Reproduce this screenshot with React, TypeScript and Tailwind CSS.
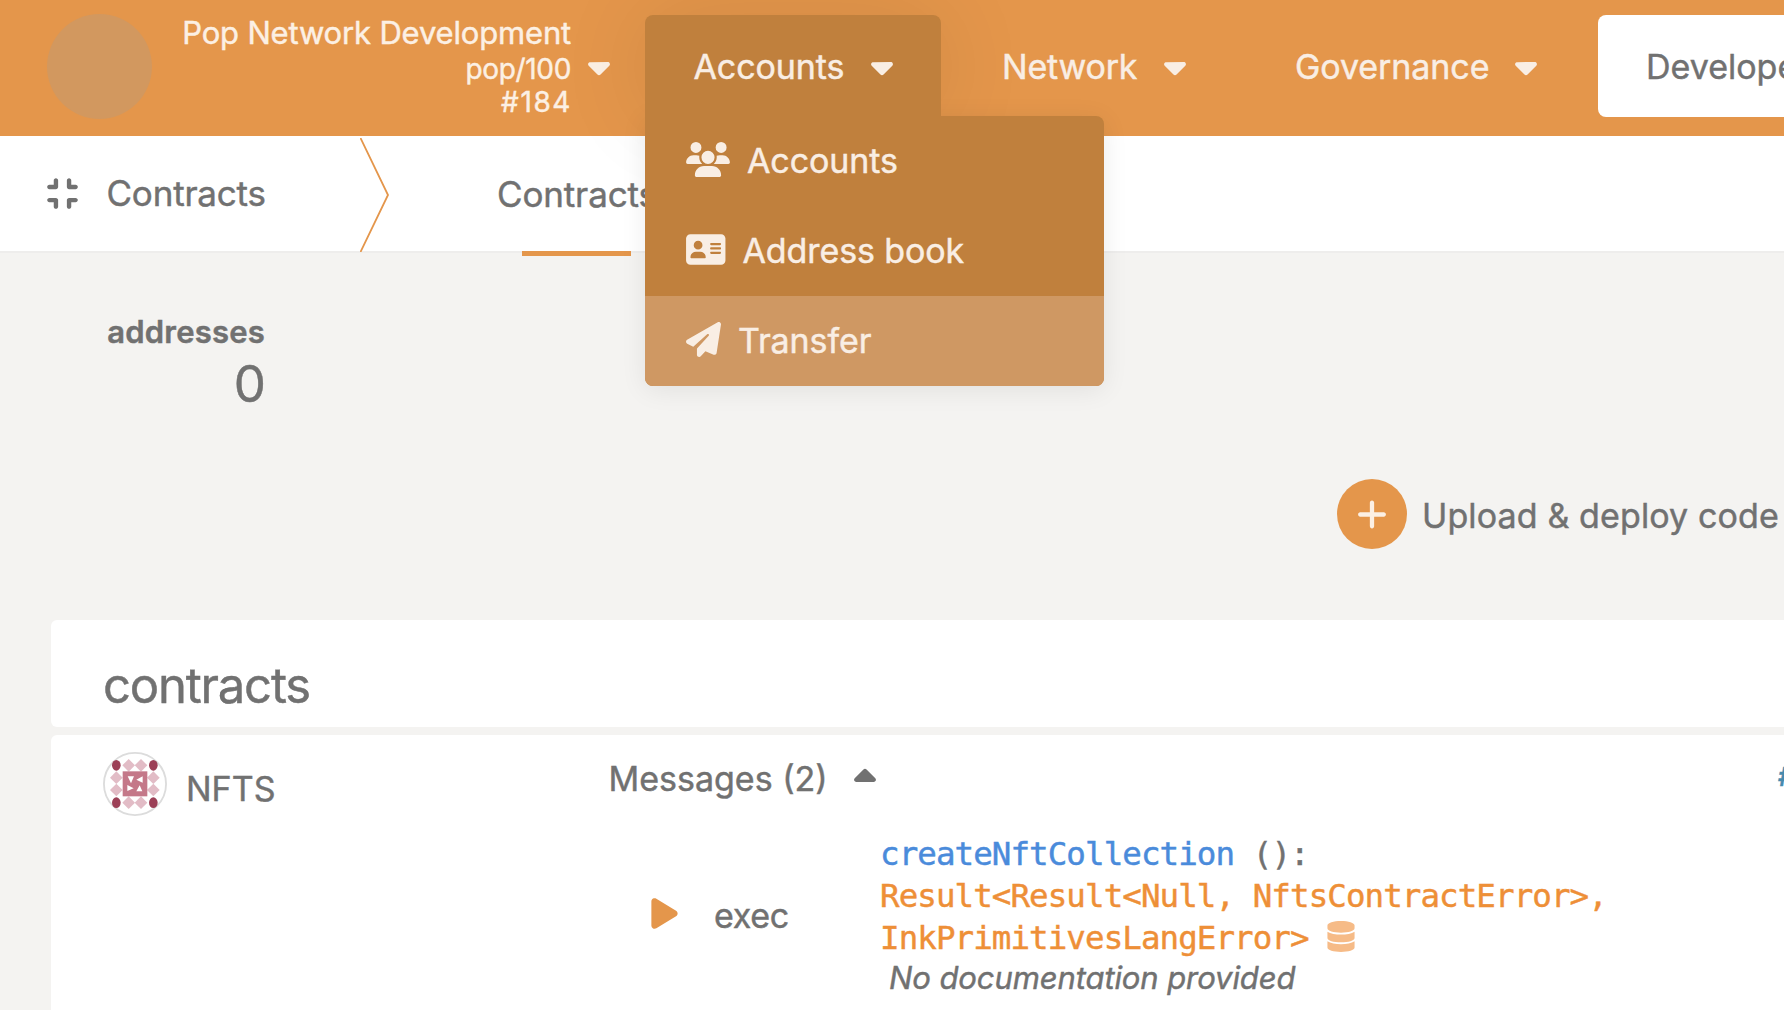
import type { ReactNode } from 'react';
import { FaDatabase } from 'react-icons/fa';
import {
  FaAddressCard,
  FaCaretDown,
  FaCaretUp,
  FaCompress,
  FaPaperPlane,
  FaPlay,
  FaPlus,
  FaUsers,
} from 'react-icons/fa6';

function ChainInfo() {
  return (
    <div className="flex w-[645px] shrink-0 text-[#fcf0e4]">
      <div className="mt-[14px] ml-[47px] size-[105px] shrink-0 rounded-full bg-[#d2985f]" />
      <div className="mt-[14px] flex w-[419px] flex-col items-end">
        <div className="h-[38px] text-[31px] leading-[38px] tracking-[-0.17px]">Pop Network Development</div>
        <div className="h-[33px] text-[28px] leading-[35px] tracking-[-0.34px]">pop/100</div>
        <div className="-mr-[1px] h-[34px] text-[28px] leading-[35px] tracking-[1.6px]">#184</div>
      </div>
      <FaCaretDown className="mt-[49px] ml-[17px] h-[35px] w-[22px]" />
    </div>
  );
}

function MenuItem({ icon, label, active }: { icon: ReactNode; label: string; active?: boolean }) {
  return (
    <div className={`flex h-[90px] items-center gap-[17px] pl-[41px] ${active ? 'bg-[#cf9863]' : ''}`}>
      <span className="pb-[3px]">{icon}</span>
      <span className="leading-[40px] tracking-[-0.1px]">{label}</span>
    </div>
  );
}

function AccountsTab() {
  return (
    <div className="relative mt-[15px] h-[102px] w-[296px] shrink-0 rounded-t-lg shadow-[0_0_95px_rgba(0,0,0,0.09)]">
      <div className="absolute top-[101px] left-0 z-10 w-[459px] overflow-hidden rounded-tr-lg rounded-b-lg bg-[#c0803d] shadow-[0_4px_26px_rgba(0,0,0,0.08)]">
        <MenuItem icon={<FaUsers className="h-[35px] w-[44px]" />} label="Accounts" />
        <MenuItem icon={<FaAddressCard className="h-[35px] w-[39.5px]" />} label="Address book" />
        <MenuItem icon={<FaPaperPlane className="size-[35px]" />} label="Transfer" active />
      </div>
      <div className="relative z-20 flex h-full items-center rounded-t-lg bg-[#c0803d] pl-[48.5px]">
        <span className="w-[152.5px] tracking-[-0.1px]">Accounts</span>
        <FaCaretDown className="ml-[25px] h-[35px] w-[22px]" />
      </div>
    </div>
  );
}

function Header() {
  return (
    <header className="flex h-[136px] bg-[#e4964b] text-[34px] text-[#f9eee4]">
      <ChainInfo />
      <AccountsTab />
      <div className="mt-[15px] flex h-[102px] w-[293px] shrink-0 items-center pl-[61px]">
        <span className="w-[137px] tracking-[-0.2px]">Network</span>
        <FaCaretDown className="ml-[25px] h-[35px] w-[22px]" />
      </div>
      <div className="mt-[15px] flex h-[102px] w-[364px] shrink-0 items-center pl-[61px]">
        <span className="w-[195px] tracking-[-0.08px]">Governance</span>
        <FaCaretDown className="ml-[25px] h-[35px] w-[22px]" />
      </div>
      <div className="mt-[15px] flex h-[102px] w-[300px] shrink-0 items-center rounded-lg bg-white pl-[48px] text-[#717171]">
        Developer
      </div>
    </header>
  );
}

function SubTabs() {
  return (
    <nav className="flex h-[115px] bg-white text-[35px]">
      <div className="flex w-[360px] items-center pl-[47px]">
        <FaCompress className="h-[35px] w-[31px]" />
        <span className="ml-[28.5px] tracking-[-0.2px]">Contracts</span>
      </div>
      <svg className="mt-[2px] h-[114px] w-[30px] shrink-0" viewBox="0 0 30 114" fill="none">
        <path d="M0.5 0L28 57L0.5 114" stroke="#e4964b" strokeWidth="1.8" />
      </svg>
      <div className="relative flex items-center pl-[107px]">
        <span className="pt-[1px] tracking-[-0.14px]">Contracts</span>
        <div className="absolute top-[115px] left-[132px] h-[5px] w-[109px] bg-[#e4964b]" />
      </div>
    </nav>
  );
}

function Identicon() {
  const lights = [
    [116, 76], [153, 76], [116, 188], [153, 188],
    [79, 113], [79, 150], [190, 113], [190, 150],
  ];
  const darks = [[79, 76], [190, 76], [79, 188], [190, 188]];
  return (
    <svg className="size-[64px] shrink-0" viewBox="39 36 192 192">
      <circle cx="135" cy="132" r="93.2" fill="#fff" stroke="#dcdcdc" strokeWidth="5.5" />
      {lights.map(([x, y]) => (
        <path key={`${x}-${y}`} d={`M${x} ${y - 19}l19 19l-19 19l-19 -19z`} fill="#e2bcc6" />
      ))}
      {darks.map(([x, y]) => (
        <ellipse key={`${x}-${y}`} cx={x} cy={y} rx="13" ry="16" fill="#9c4057" />
      ))}
      <rect x="98" y="94" width="74" height="75" fill="#c47889" />
      <path d="M113 109H132L123 130ZM139 119L158 109V128ZM112 135L131 145L112 153ZM149 136L157 154H139Z" fill="#fff" />
    </svg>
  );
}

function ContractRow() {
  return (
    <section className="flex h-[275px] overflow-hidden rounded-tl-[6px] bg-white pl-[52px]">
      <div className="flex w-[507px] shrink-0 pt-[17px]">
        <Identicon />
        <span className="mt-[17px] ml-[19px] h-[40px] text-[34px] leading-[40px]">NFTS</span>
      </div>
      <div className="w-[1166px] shrink-0">
        <div className="flex h-[84px] pt-[23px] leading-[42px]">
          <span className="-ml-[1.5px] w-[217.5px] whitespace-nowrap">Messages (2)</span>
          <FaCaretUp className="mt-[2px] ml-[28px] h-[35px] w-[22px]" />
        </div>
        <div className="flex">
          <FaPlay className="mt-[77px] ml-[41px] h-[35px] w-[27px] text-[#e4964b]" />
          <span className="mt-[76px] ml-[36px] w-[166px] leading-[42px] tracking-[-0.3px]">exec</span>
          <div className="mt-[14px]">
            <div className="h-[126px] font-['DejaVu_Sans_Mono',monospace] text-[32.5px] leading-[42px] tracking-[-0.93px] whitespace-pre text-[#ee8f37]">
              <div>
                <span className="text-[#4a8bdb]">createNftCollection</span>
                <span className="text-[#717171]"> ():</span>
              </div>
              <div>{'Result<Result<Null, NftsContractError>,'}</div>
              <div className="flex">
                <span>{'InkPrimitivesLangError>'}</span>
                <FaDatabase className="mt-[4px] ml-[18px] h-[31px] w-[28px] text-[#f6bb87]" />
              </div>
            </div>
            <div className="-mt-[1px] ml-[9px] text-[31px] leading-[40px] tracking-[-0.1px] italic">No documentation provided</div>
          </div>
        </div>
      </div>
      <span className="mt-[26px] ml-[2px] text-[26px] leading-[32px] font-semibold text-[#478aae]">#</span>
    </section>
  );
}

export default function App() {
  return (
    <div className="h-[1010px] w-[1784px] overflow-hidden bg-[#f4f3f1] font-['Inter',sans-serif] text-[34px] text-[#717171] [-webkit-text-stroke:0.45px]">
      <Header />
      <SubTabs />
      <main className="border-t-2 border-[#eeedec]">
        <div className="flex h-[226px] w-[265px] flex-col items-end pt-[59px]">
          <div className="h-[40px] text-[31px] leading-[40px] font-semibold tracking-[0.21px]">addresses</div>
          <div className="-mr-[1px] text-[51px] leading-[64px]">0</div>
        </div>
        <div className="flex h-[141px] pl-[1337px]">
          <div className="flex size-[70px] shrink-0 items-center justify-center rounded-full bg-[#e4964b] text-[#fcf0e4]">
            <FaPlus className="h-[35px] w-[30px]" />
          </div>
          <span className="mt-[17px] ml-[15px] leading-[40px] tracking-[0.12px] whitespace-nowrap">Upload &amp; deploy code</span>
        </div>
        <div className="flex flex-col gap-[8px] pl-[51px]">
          <section className="h-[107px] rounded-l-[6px] bg-white pl-[52px]">
            <h1 className="pt-[36px] text-[49px] leading-[60px] tracking-[-1.2px]">contracts</h1>
          </section>
          <ContractRow />
        </div>
      </main>
    </div>
  );
}
